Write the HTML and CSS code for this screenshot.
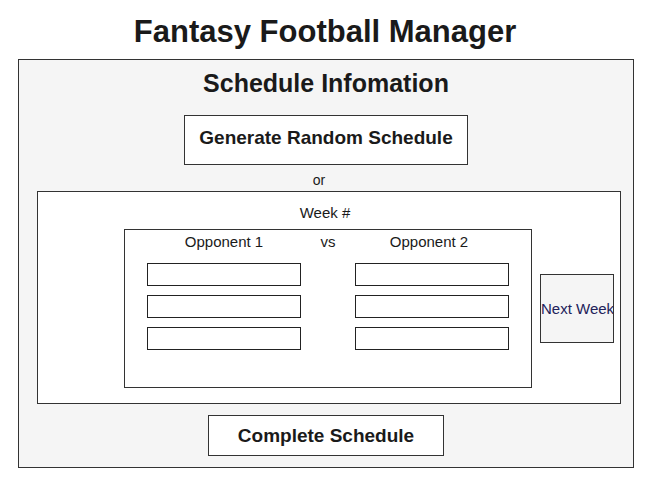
FILE: index.html
```html
<!DOCTYPE html>
<html lang="en">
<head>
  <meta charset="utf-8">
  <title>Fantasy Football Manager</title>
  <link rel="stylesheet" href="styles.css">
</head>
<body>
  <h1 class="title">Fantasy Football Manager</h1>

  <div class="panel">
    <h2 class="panel-title">Schedule Infomation</h2>

    <button class="btn btn-generate">Generate Random Schedule</button>

    <div class="or">or</div>

    <!-- week editor -->
    <div class="week-box">
      <div class="week-label">Week #</div>

      <div class="week-row">
        <div class="matchups">
          <div class="matchup-head">
            <span>Opponent 1</span>
            <span>vs</span>
            <span>Opponent 2</span>
          </div>
          <div class="matchup-grid">
            <input class="team-input" type="text">
            <span></span>
            <input class="team-input" type="text">
            <input class="team-input" type="text">
            <span></span>
            <input class="team-input" type="text">
            <input class="team-input" type="text">
            <span></span>
            <input class="team-input" type="text">
          </div>
        </div>

        <div class="next-week">Next Week</div>
      </div>
    </div>

    <button class="btn btn-complete">Complete Schedule</button>
  </div>
</body>
</html>
```

FILE: styles.css
```css
body {
  margin: 0;
  font-family: "Liberation Sans", Arial, sans-serif;
  color: #1a1a1a;
  background: white;
}

.title {
  box-sizing: border-box;
  margin: 0;
  height: 59px;
  padding-top: 5px;
  display: flex;
  align-items: center;
  justify-content: center;
  font-size: 31px;
  font-weight: 700;
}

.panel {
  box-sizing: border-box;
  margin-left: 18px;
  width: 616px;
  height: 409px;
  background: #f5f5f5;
  border: 1px solid #333;
  display: flex;
  flex-direction: column;
  align-items: center;
}

.panel-title {
  margin: 8px 0 0;
  line-height: 30px;
  font-size: 25px;
  font-weight: 700;
}

.btn {
  box-sizing: border-box;
  background: white;
  border: 1px solid #333;
  font-family: inherit;
  font-weight: 700;
  color: #1a1a1a;
  padding: 0;
}

.btn-generate {
  margin-top: 17px;
  width: 284px;
  height: 50px;
  padding-bottom: 4px;
  font-size: 19px;
}

.or {
  margin-top: 7px;
  line-height: 16px;
  font-size: 14px;
  margin-right: 14px;
}

.week-box {
  box-sizing: border-box;
  align-self: flex-start;
  margin: 3px 0 0 18px;
  width: 584px;
  height: 213px;
  background: white;
  border: 1px solid #333;
  padding-top: 13px;
}

.week-label {
  text-align: center;
  line-height: 16px;
  font-size: 15px;
  padding-right: 8px;
}

.week-row {
  margin-top: 8px;
  margin-left: 86px;
  display: flex;
  align-items: center;
  gap: 8px;
}

.matchups {
  box-sizing: border-box;
  width: 408px;
  height: 159px;
  border: 1px solid #333;
  padding: 3px 22px 0;
}

.matchup-head,
.matchup-grid {
  display: grid;
  grid-template-columns: 154px 54px 154px;
}

.matchup-head {
  line-height: 18px;
  font-size: 15px;
  text-align: center;
}

.matchup-head span:last-child {
  margin-right: 6px;
}

.matchup-grid {
  margin-top: 12px;
  row-gap: 9px;
}

.team-input {
  box-sizing: border-box;
  height: 23px;
  margin: 0;
  border: 1px solid #222;
  background: white;
}

.next-week {
  box-sizing: border-box;
  width: 74px;
  height: 69px;
  background: #f5f5f5;
  border: 1px solid #333;
  display: flex;
  align-items: center;
  font-size: 15px;
  color: #22225a;
  white-space: nowrap;
  overflow: hidden;
}

.btn-complete {
  margin-top: 11px;
  width: 236px;
  height: 41px;
  font-size: 19px;
}
```
